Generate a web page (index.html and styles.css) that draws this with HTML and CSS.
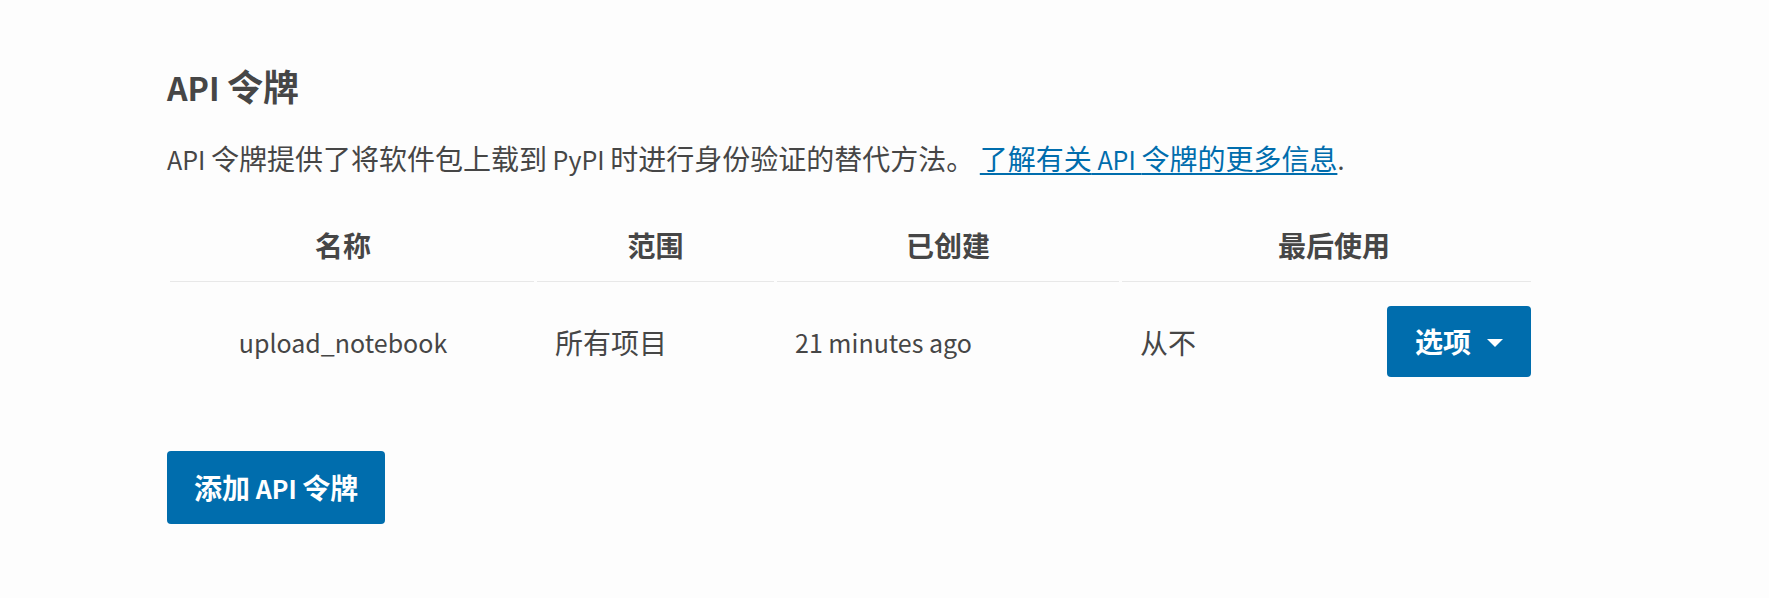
FILE: index.html
```html
<!DOCTYPE html>
<html lang="zh-CN">
<head>
<meta charset="utf-8">
<title>API 令牌</title>
<link rel="stylesheet" href="styles.css">
</head>
<body>
<main class="page">
  <h2 class="title"><span class="en">API </span>令牌</h2>
  <p class="intro"><span class="en">API </span>令牌提供了将软件包上载到<span class="en"> PyPI </span>时进行身份验证的替代方法。<span class="en"> </span><a class="link" href="#">了解有关<span class="en"> API </span>令牌的更多信息</a><span class="en">.</span></p>
  <table class="tokens">
    <colgroup>
      <col class="c-name">
      <col class="c-scope">
      <col class="c-created">
      <col class="c-used">
      <col class="c-opts">
    </colgroup>
    <thead>
      <tr>
        <th class="h-name">名称</th>
        <th>范围</th>
        <th>已创建</th>
        <th class="h-used" colspan="2">最后使用</th>
      </tr>
    </thead>
    <tbody>
      <tr>
        <td class="d-name"><span class="en">upload_notebook</span></td>
        <td>所有项目</td>
        <td><span class="en">21 minutes ago</span></td>
        <td>从不</td>
        <td class="d-opts"><button class="btn btn-opts" type="button">选项<span class="caret"></span></button></td>
      </tr>
    </tbody>
  </table>
  <button class="btn btn-add" type="button">添加<span class="en"> API </span>令牌</button>
</main>
</body>
</html>
```
FILE: styles.css
```css
html, body {
  margin: 0;
  padding: 0;
  background: #fdfdfd;
}
body {
  font-family: "Noto Sans CJK SC", "Noto Sans", sans-serif;
  color: #464646;
  font-size: 28px;
}
.en {
  font-size: 0.893em;
}
.page {
  padding: 64px 0 0 167px;
}
.title {
  margin: 0;
  font-size: 36px;
  line-height: 43px;
  font-weight: 700;
}
.intro {
  margin: 28px 0 0;
  line-height: 42px;
}
.link {
  color: #006dad;
  text-decoration: underline;
  text-decoration-thickness: 2px;
  text-underline-offset: 3px;
}
.tokens {
  margin-top: 29px;
  table-layout: fixed;
  width: 1367px;
  border-collapse: separate;
  border-spacing: 3px 0;
}
.c-name { width: 364px; }
.c-scope { width: 237px; }
.c-created { width: 342px; }
.c-used { width: 262px; }
.c-opts { width: 144px; }
.tokens th {
  font-weight: 700;
  line-height: 42px;
  padding: 15px 0;
  text-align: center;
  border-bottom: 1px solid #e8e8e8;
}
.tokens th.h-name { padding-right: 18px; }
.tokens th.h-used { padding-left: 15px; }
.tokens td {
  line-height: 42px;
  padding: 24px 0 24px 18px;
  vertical-align: middle;
  white-space: nowrap;
}
.tokens td.d-name {
  padding-left: 0;
  padding-right: 18px;
  text-align: center;
}
.tokens td.d-opts {
  padding-left: 0;
  text-align: right;
}
.btn {
  font-family: inherit;
  font-size: 28px;
  font-weight: 700;
  line-height: 41px;
  color: #ffffff;
  background: #006dad;
  border: 0;
  border-radius: 4px;
  padding: 15px 28px;
  cursor: pointer;
}
.btn-opts {
  display: inline-flex;
  align-items: center;
  gap: 16px;
}
.caret {
  width: 0;
  height: 0;
  border-left: 8px solid transparent;
  border-right: 8px solid transparent;
  border-top: 8px solid #ffffff;
  margin-top: 3px;
}
.btn-add {
  display: block;
  margin-top: 50px;
  line-height: 42px;
  padding: 15px 27px;
}
```
